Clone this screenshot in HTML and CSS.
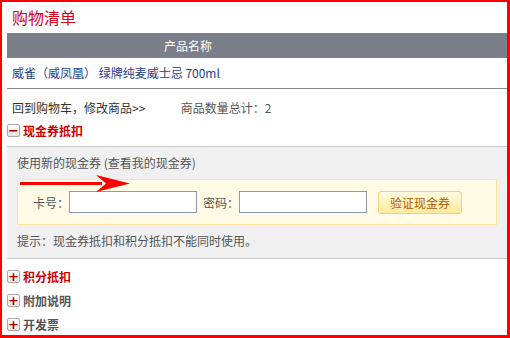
FILE: index.html
```html
<!DOCTYPE html>
<html lang="zh-CN">
<head>
  <meta charset="UTF-8" />
  <title>购物清单</title>
  <link rel="stylesheet" href="styles.css">
</head>
<body>
  <div class="frame">
    <h1 class="title">购物清单</h1>

    <div class="list-head"><span class="col-name">产品名称</span></div>
    <div class="list-row"><a class="product" href="#">威雀（威凤凰） 绿牌纯麦威士忌 700ml</a></div>

    <div class="summary">
      <a class="back" href="#">回到购物车，修改商品&gt;&gt;</a>
      <span class="count">商品数量总计：2</span>
    </div>

    <div class="fold open"><span class="fold-icon">&minus;</span>现金券抵扣</div>
    <div class="coupon">
      <div class="coupon-tip">使用新的现金券 (查看我的现金券)</div>
      <div class="coupon-box">
        <label class="field-label">卡号：</label>
        <input class="field" type="text" />
        <label class="field-label pwd">密码：</label>
        <input class="field" type="password" />
        <button class="verify">验证现金券</button>
      </div>
      <div class="coupon-note">提示：现金券抵扣和积分抵扣不能同时使用。</div>

      <svg class="arrow" width="112" height="18" viewBox="0 0 112 18">
        <rect x="0" y="7" width="82" height="3" fill="#ff0000"/>
        <path d="M76 0 L110 8.5 L76 17 L86 8.5 Z" fill="#ff0000"/>
      </svg>
    </div>

    <div class="fold red"><span class="fold-icon">+</span>积分抵扣</div>
    <div class="fold"><span class="fold-icon">+</span>附加说明</div>
    <div class="fold"><span class="fold-icon">+</span>开发票</div>
  </div>
</body>
</html>
```

FILE: styles.css
```css
* {
  box-sizing: border-box;
}

body {
  margin: 0;
  font-family: "Noto Sans CJK SC", "DejaVu Sans", sans-serif;
  font-size: 12px;
  background: #fff;
}

.frame {
  width: 510px;
  height: 338px;
  border-style: solid;
  border-color: #ff0000;
  border-width: 2px 3px 3px 2px;
  padding-left: 5px;
  overflow: hidden;
}

.title {
  margin: 0;
  padding: 3px 0 0 5px;
  font-size: 16px;
  font-weight: normal;
  line-height: 24px;
  color: #d4001a;
}

.list-head {
  margin-top: 4px;
  height: 25px;
  line-height: 25px;
  background: #7b7f89;
  color: #fff;
}

.col-name {
  display: inline-block;
  width: 362px;
  text-align: center;
}

.list-row {
  height: 31px;
  line-height: 30px;
  padding-left: 5px;
  border-bottom: 1px solid #8a8a8a;
}

.product {
  color: #1f3c8c;
  text-decoration: none;
}

.summary {
  margin-top: 8px;
  padding-left: 5px;
  line-height: 22px;
  color: #333;
}

.back {
  display: inline-block;
  width: 166px;
  color: #333;
  text-decoration: none;
}

.count {
  color: #555;
}

.fold {
  display: flex;
  align-items: center;
  height: 24px;
  font-weight: bold;
  color: #555;
}

.fold.open {
  height: 22px;
  margin-bottom: 5px;
  color: #cc0000;
}

.fold.red {
  margin-top: 5px;
  color: #cc0000;
}

.fold-icon {
  display: inline-flex;
  align-items: center;
  justify-content: center;
  width: 13px;
  height: 13px;
  margin-right: 3px;
  border: 1px solid #a8a8a8;
  border-radius: 2px;
  background: linear-gradient(#ffffff, #e4e4e4);
  color: #b00000;
  font-family: "DejaVu Sans", sans-serif;
  font-size: 13px;
  font-weight: bold;
  line-height: 1;
}

.coupon {
  position: relative;
  background: #f0f0f0;
  border-top: 1px solid #c8c8c8;
  border-bottom: 1px solid #c8c8c8;
  padding: 5px 10px 6px 10px;
  color: #555;
}

.coupon-tip,
.coupon-note {
  line-height: 22px;
}

.coupon-box {
  display: flex;
  align-items: center;
  height: 46px;
  margin-top: 5px;
  margin-bottom: 5px;
  padding-left: 15px;
  background: #fffbe6;
  border: 1px solid #fde3a0;
}

.field-label {
  width: 36px;
}

.field-label.pwd {
  margin-left: 6px;
}

.field {
  width: 128px;
  height: 22px;
  border: 1px solid #8d9cab;
  background: #fff;
  padding: 0 3px;
  font-size: 12px;
}

.verify {
  width: 84px;
  height: 23px;
  margin-left: 11px;
  padding: 0;
  border: 1px solid #f3d26c;
  border-radius: 3px;
  background: linear-gradient(#fffbe2, #ffeaa0);
  color: #b35f00;
  font-family: "Noto Sans CJK SC", sans-serif;
  font-size: 12px;
  cursor: pointer;
}

.arrow {
  position: absolute;
  left: 13px;
  top: 28px;
}
```
